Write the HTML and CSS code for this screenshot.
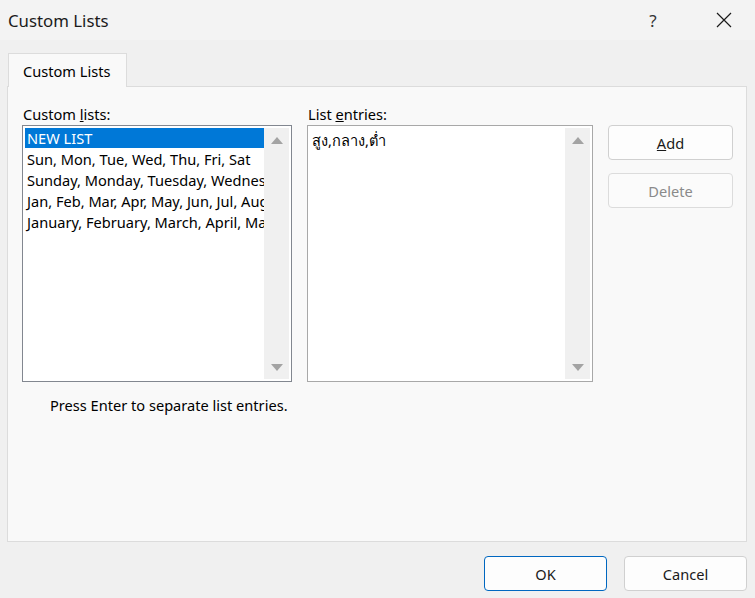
FILE: index.html
```html
<!DOCTYPE html>
<html lang="en">
<head>
    <meta charset="UTF-8">
    <title>Custom Lists</title>
    <link rel="stylesheet" href="styles.css">
</head>
<body>
    <div class="dialog">
        <div class="titlebar">
            <span class="title">Custom Lists</span>
            <span class="help">?</span>
            <span class="close">
                <svg width="16" height="16" viewBox="0 0 16 16"><path d="M1 1L15 15M15 1L1 15" stroke="#1a1a1a" stroke-width="1.2" fill="none"/></svg>
            </span>
        </div>

        <div class="tabs">
            <div class="tab">Custom Lists</div>
        </div>

        <div class="panel">
            <div class="grid">
                <div class="col">
                    <label class="lbl">Custom <u>l</u>ists:</label>
                    <div class="listbox lists">
                        <div class="items">
                            <div class="item selected">NEW LIST</div>
                            <div class="item">Sun, Mon, Tue, Wed, Thu, Fri, Sat</div>
                            <div class="item">Sunday, Monday, Tuesday, Wednesday, Thursday, Friday, Saturday</div>
                            <div class="item">Jan, Feb, Mar, Apr, May, Jun, Jul, Aug, Sep, Oct, Nov, Dec</div>
                            <div class="item">January, February, March, April, May, June, July, August</div>
                        </div>
                        <div class="scroll">
                            <span class="arrow up"></span>
                            <span class="arrow down"></span>
                        </div>
                    </div>
                    <p class="hint">Press Enter to separate list entries.</p>
                </div>

                <div class="col">
                    <label class="lbl">List <u>e</u>ntries:</label>
                    <div class="listbox entries">
                        <div class="items text">สูง,กลาง,ต่ำ</div>
                        <div class="scroll">
                            <span class="arrow up"></span>
                            <span class="arrow down"></span>
                        </div>
                    </div>
                </div>

                <div class="side">
                    <button class="btn"><u>A</u>dd</button>
                    <button class="btn" disabled>Delete</button>
                </div>
            </div>
        </div>

        <div class="footer">
            <button class="btn ok">OK</button>
            <button class="btn">Cancel</button>
        </div>
    </div>
</body>
</html>
```

FILE: styles.css
```css
* {
    margin: 0;
    padding: 0;
    box-sizing: border-box;
}

body {
    width: 755px;
    height: 598px;
    overflow: hidden;
    background: #f0f0f0;
    font-family: 'Noto Sans', 'Open Sans', sans-serif;
    font-size: 14.6px;
    color: #000;
}

.dialog {
    display: flex;
    flex-direction: column;
    height: 598px;
}

/* title bar */
.titlebar {
    height: 40px;
    display: flex;
    align-items: center;
    background: #f3f3f3;
    padding-left: 8px;
}

.title {
    flex: 1;
    font-size: 16.8px;
    color: #1a1a1a;
}

.help {
    width: 16px;
    font-size: 17px;
    color: #333;
    margin-right: 55px;
    text-align: center;
}

.close {
    display: flex;
    margin-right: 23px;
}

/* tab strip */
.tabs {
    display: flex;
    padding: 13px 0 0 8px;
}

.tab {
    width: 119px;
    height: 34px;
    background: #f9f9f9;
    border: 1px solid #dcdcdc;
    border-bottom: none;
    margin-bottom: -1px;
    position: relative;
    z-index: 1;
    padding: 7px 0 0 14px;
}

.panel {
    margin: 0 8px 0 7px;
    height: 456px;
    background: #f9f9f9;
    border: 1px solid #dcdcdc;
    padding: 17px 14px 0 14px;
}

.grid {
    display: flex;
    gap: 15px;
}

.col {
    display: flex;
    flex-direction: column;
}

.lbl {
    height: 21px;
    line-height: 21px;
    padding-left: 1px;
}

/* list boxes */
.listbox {
    display: flex;
    height: 257px;
    background: #fff;
    border: 1px solid #828790;
    padding: 2px;
}

.lists {
    width: 270px;
}

.entries {
    width: 286px;
    border-color: #a8a8a8;
}

.items {
    flex: 1;
    min-width: 0;
    overflow: hidden;
}

.item {
    height: 21px;
    line-height: 20px;
    padding-left: 2px;
    white-space: nowrap;
    overflow: hidden;
}

.item.selected {
    background: #0078d7;
    color: #fff;
    height: 20px;
    margin-bottom: 1px;
}

.text {
    padding: 1px 0 0 2px;
}

.scroll {
    width: 25px;
    background: #f0f0f0;
    display: flex;
    flex-direction: column;
    justify-content: space-between;
    align-items: center;
    padding: 9px 0 8px;
}

.arrow {
    width: 0;
    height: 0;
    border-left: 6px solid transparent;
    border-right: 6px solid transparent;
}

.arrow.up {
    border-bottom: 7px solid #a3a3a3;
}

.arrow.down {
    border-top: 7px solid #a3a3a3;
}

.hint {
    margin: 13px 0 0 28px;
}

/* buttons */
.side {
    display: flex;
    flex-direction: column;
    gap: 13px;
    padding-top: 21px;
}

.btn {
    width: 125px;
    height: 35px;
    background: #fdfdfd;
    border: 1px solid #d0d0d0;
    border-radius: 4px;
    font-family: 'Noto Sans', 'Open Sans', sans-serif;
    font-size: 14.6px;
    color: #1a1a1a;
}

.btn:disabled {
    color: #8a8a8a;
    background: #fbfbfb;
    border-color: #dcdcdc;
}

.footer {
    display: flex;
    justify-content: flex-end;
    gap: 17px;
    padding: 14px 8px 0 0;
}

.footer .btn {
    width: 123px;
}

.btn.ok {
    border-color: #0067c0;
}
```
